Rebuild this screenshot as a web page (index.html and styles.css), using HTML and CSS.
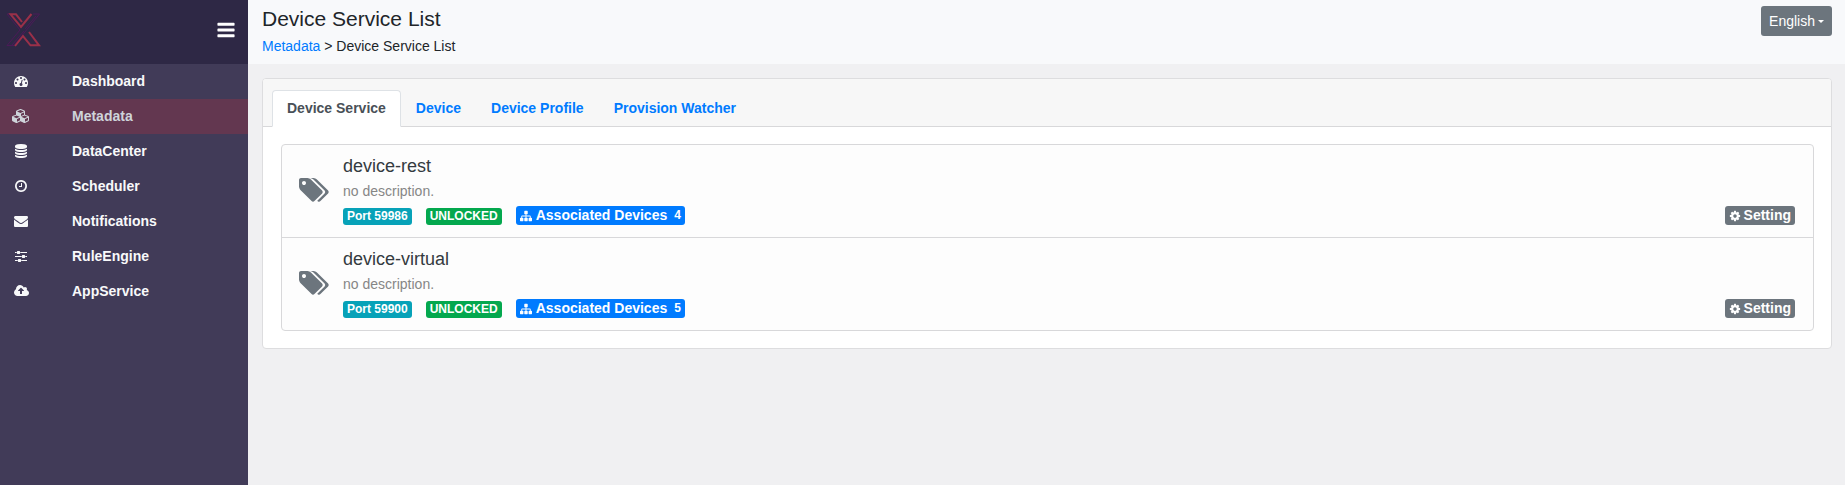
FILE: index.html
```html
<!DOCTYPE html>
<html lang="en">
<head>
<meta charset="utf-8">
<meta name="viewport" content="width=device-width, initial-scale=1">
<title>Device Service List</title>
<link rel="stylesheet" href="styles.css">
</head>
<body>
<svg class="sprite" aria-hidden="true">
  <symbol id="bars" viewBox="0 0 1792 1792"><path d="M1664 1344v128q0 26-19 45t-45 19h-1408q-26 0-45-19t-19-45v-128q0-26 19-45t45-19h1408q26 0 45 19t19 45zm0-512v128q0 26-19 45t-45 19h-1408q-26 0-45-19t-19-45v-128q0-26 19-45t45-19h1408q26 0 45 19t19 45zm0-512v128q0 26-19 45t-45 19h-1408q-26 0-45-19t-19-45v-128q0-26 19-45t45-19h1408q26 0 45 19t19 45z"/></symbol>
  <symbol id="gauge" viewBox="0 0 1792 1792"><path d="M384 1152q0-53-37.5-90.5t-90.5-37.5-90.5 37.5-37.5 90.5 37.5 90.5 90.5 37.5 90.5-37.5 37.5-90.5zm192-448q0-53-37.5-90.5t-90.5-37.5-90.5 37.5-37.5 90.5 37.5 90.5 90.5 37.5 90.5-37.5 37.5-90.5zm428 481l101-382q6-26-7.5-48.5t-38.5-29.5-48 6.5-30 39.5l-101 382q-60 5-107 43.5t-63 98.5q-20 77 20 146t117 89 146-20 89-117q16-60-6-117t-72-91zm660-33q0-53-37.5-90.5t-90.5-37.5-90.5 37.5-37.5 90.5 37.5 90.5 90.5 37.5 90.5-37.5 37.5-90.5zm-640-640q0-53-37.5-90.5t-90.5-37.5-90.5 37.5-37.5 90.5 37.5 90.5 90.5 37.5 90.5-37.5 37.5-90.5zm448 192q0-53-37.5-90.5t-90.5-37.5-90.5 37.5-37.5 90.5 37.5 90.5 90.5 37.5 90.5-37.5 37.5-90.5zm320 448q0 261-141 483-19 29-54 29h-1402q-35 0-54-29-141-221-141-483 0-182 71-348t191-286 286-191 348-71 348 71 286 191 191 286 71 348z"/></symbol>
  <symbol id="cubes" viewBox="0 0 2304 1792"><path d="M640 1632l384-192v-314l-384 164v342zm-64-454l404-173-404-173-404 173zm1088 454l384-192v-314l-384 164v342zm-64-454l404-173-404-173-404 173zm-448-293l384-165v-266l-384 164v267zm-64-379l441-189-441-189-441 189zm1088 518v416q0 36-19 67t-52 47l-448 224q-25 14-57 14t-57-14l-448-224q-4-2-7-4-2 2-7 4l-448 224q-25 14-57 14t-57-14l-448-224q-33-16-52-47t-19-67v-416q0-38 21.500-70t56.500-48l434-186v-400q0-38 21.500-70t56.500-48l448-192q23-10 50-10t50 10l448 192q35 16 56.500 48t21.500 70v400l434 186q36 16 57 48t21 70z" fill-rule="evenodd"/></symbol>
  <symbol id="database" viewBox="0 0 1792 1792"><path d="M896 768q237 0 443-43t325-127v170q0 69-103 128t-280 93.5-385 34.5-385-34.5-280-93.5-103-128v-170q119 84 325 127t443 43zm0 768q237 0 443-43t325-127v170q0 69-103 128t-280 93.5-385 34.5-385-34.5-280-93.5-103-128v-170q119 84 325 127t443 43zm0-384q237 0 443-43t325-127v170q0 69-103 128t-280 93.5-385 34.5-385-34.5-280-93.5-103-128v-170q119 84 325 127t443 43zm0-1152q208 0 385 34.5t280 93.5 103 128v128q0 69-103 128t-280 93.5-385 34.5-385-34.5-280-93.5-103-128v-128q0-69 103-128t280-93.5 385-34.5z"/></symbol>
  <symbol id="clock" viewBox="0 0 1792 1792"><path d="M1024 544v448q0 14-9 23t-23 9h-320q-14 0-23-9t-9-23v-64q0-14 9-23t23-9h224v-352q0-14 9-23t23-9h64q14 0 23 9t9 23zm416 352q0-148-73-273t-198-198-273-73-273 73-198 198-73 273 73 273 198 198 273 73 273-73 198-198 73-273zm224 0q0 209-103 385.5t-279.5 279.5-385.5 103-385.5-103-279.5-279.5-103-385.5 103-385.5 279.5-279.5 385.5-103 385.5 103 279.5 279.5 103 385.5z"/></symbol>
  <symbol id="envelope" viewBox="0 0 1792 1792"><path d="M1792 710v794q0 66-47 113t-113 47h-1472q-66 0-113-47t-47-113v-794q44 49 101 87 362 246 497 345 57 42 92.5 65.5t94.5 48 110 24.500h2q51 0 110-24.500t94.500-48 92.500-65.500q170-123 498-345 57-39 100-87zm0-294q0 79-49 151t-122 123q-376 261-468 325-10 7-42.500 31t-54 38.500-52 32.500-57.500 27-50 9h-2q-23 0-50-9t-57.500-27-52-32.500-54-38.500-42.500-31q-91-64-262-182.500t-205-142.500q-62-42-117-115.500t-55-136.500q0-78 41.500-130t118.500-52h1472q65 0 112.500 47t47.500 113z"/></symbol>
  <symbol id="sliders" viewBox="0 0 1792 1792"><path d="M480 1408v128h-352v-128h352zm352-128q26 0 45 19t19 45v256q0 26-19 45t-45 19h-256q-26 0-45-19t-19-45v-256q0-26 19-45t45-19h256zm160-384v128h-864v-128h864zm-640-512v128h-224v-128h224zm1312 1024v128h-736v-128h736zm-960-1152q26 0 45 19t19 45v256q0 26-19 45t-45 19h-256q-26 0-45-19t-19-45v-256q0-26 19-45t45-19h256zm640 512q26 0 45 19t19 45v256q0 26-19 45t-45 19h-256q-26 0-45-19t-19-45v-256q0-26 19-45t45-19h256zm320 128v128h-224v-128h224zm0-512v128h-864v-128h864z"/></symbol>
  <symbol id="cloud" viewBox="0 0 1920 1792"><path d="M1280 864q0-14-9-23l-352-352q-9-9-23-9t-23 9l-351 351q-10 12-10 24 0 14 9 23t23 9h224v352q0 13 9.500 22.500t22.500 9.500h192q13 0 22.500-9.500t9.500-22.500v-352h224q13 0 22.500-9.500t9.500-22.500zm640 288q0 159-112.500 271.500t-271.500 112.500h-1088q-185 0-316.500-131.500t-131.500-316.500q0-130 70-240t188-165q-2-30-2-43 0-212 150-362t362-150q156 0 285.500 87t188.500 231q71-62 166-62 106 0 181 75t75 181q0 76-41 138 130 31 213.500 135.500t83.500 238.500z"/></symbol>
  <symbol id="tags" viewBox="0 0 1920 1792"><path d="M448 448q0-53-37.500-90.500t-90.500-37.500-90.500 37.500-37.500 90.500 37.500 90.500 90.500 37.500 90.500-37.500 37.500-90.500zm1067 576q0 53-37 90l-491 492q-39 37-91 37-53 0-90-37l-715-716q-38-37-64.500-101t-26.500-117v-416q0-52 38-90t90-38h416q53 0 117 26.500t102 64.500l715 714q37 39 37 91zm384 0q0 53-37 90l-491 492q-39 37-91 37-36 0-59-14t-53-45l470-470q37-37 37-90 0-52-37-91l-715-714q-38-38-102-64.500t-117-26.500h224q53 0 117 26.500t102 64.500l715 714q37 39 37 91z"/></symbol>
  <symbol id="sitemap" viewBox="0 0 1792 1792"><path d="M1792 1248v320q0 40-28 68t-68 28h-320q-40 0-68-28t-28-68v-320q0-40 28-68t68-28h96v-192h-512v192h96q40 0 68 28t28 68v320q0 40-28 68t-68 28h-320q-40 0-68-28t-28-68v-320q0-40 28-68t68-28h96v-192h-512v192h96q40 0 68 28t28 68v320q0 40-28 68t-68 28h-320q-40 0-68-28t-28-68v-320q0-40 28-68t68-28h96v-192q0-52 38-90t90-38h512v-192h-96q-40 0-68-28t-28-68v-320q0-40 28-68t68-28h320q40 0 68 28t28 68v320q0 40-28 68t-68 28h-96v192h512q52 0 90 38t38 90v192h96q40 0 68 28t28 68z"/></symbol>
  <symbol id="cog" viewBox="0 0 1792 1792"><path d="M1152 896q0-106-75-181t-181-75-181 75-75 181 75 181 181 75 181-75 75-181zm512-109v222q0 12-8 23t-20 13l-185 28q-19 54-39 91 35 50 107 138 10 12 10 25t-9 23q-27 37-99 108t-94 71q-12 0-26-9l-138-108q-44 23-91 38-16 136-29 186-7 28-36 28h-222q-14 0-24.500-8.500t-11.500-21.500l-28-184q-49-16-90-37l-141 107q-10 9-25 9-14 0-25-11-126-114-165-168-7-10-7-23 0-12 8-23 15-21 51-66.500t54-70.500q-27-50-41-99l-183-27q-13-2-21-12.500t-8-23.500v-222q0-12 8-23t19-13l186-28q14-46 39-92-40-57-107-138-10-12-10-24 0-10 9-23 26-36 98.500-107.500t94.500-71.500q13 0 26 10l138 107q44-23 91-38 16-136 29-186 7-28 36-28h222q14 0 24.500 8.500t11.500 21.500l28 184q49 16 90 37l142-107q9-9 24-9 13 0 25 10 129 119 165 170 7 8 7 22 0 12-8 23-15 21-51 66.500t-54 70.500q26 50 41 98l183 28q13 2 21 12.500t8 23.500z"/></symbol>
</svg>
<div class="app">
  <aside class="sidebar">
    <div class="brand">
      <svg class="logo" viewBox="0 0 36 36" role="img" aria-label="Logo">
        <path class="logo-violet" d="M5 2H2L15 18L2 33.500H9L34.500 2H28M19 19L7 33M31 4L20 17"/>
        <path class="logo-red" d="M17 10L11 2.300H5.500L16 15L26.500 2M24 20L34 33.300H25.500L18 24L10 34"/>
      </svg>
      <button class="toggle" type="button" aria-label="Toggle menu"><svg class="icon-lg"><use href="#bars"/></svg></button>
    </div>
    <nav class="menu">
      <a class="menu-item" href="#"><span class="menu-icon"><svg class="icon"><use href="#gauge"/></svg></span>Dashboard</a>
      <a class="menu-item active" href="#"><span class="menu-icon"><svg class="icon icon-cubes"><use href="#cubes"/></svg></span>Metadata</a>
      <a class="menu-item" href="#"><span class="menu-icon"><svg class="icon"><use href="#database"/></svg></span>DataCenter</a>
      <a class="menu-item" href="#"><span class="menu-icon"><svg class="icon"><use href="#clock"/></svg></span>Scheduler</a>
      <a class="menu-item" href="#"><span class="menu-icon"><svg class="icon"><use href="#envelope"/></svg></span>Notifications</a>
      <a class="menu-item" href="#"><span class="menu-icon"><svg class="icon"><use href="#sliders"/></svg></span>RuleEngine</a>
      <a class="menu-item" href="#"><span class="menu-icon"><svg class="icon icon-cloud"><use href="#cloud"/></svg></span>AppService</a>
    </nav>
  </aside>
  <div class="page">
    <header class="topbar">
      <div>
        <h1 class="title">Device Service List</h1>
        <div class="breadcrumb"><a class="link" href="#">Metadata</a> &gt; Device Service List</div>
      </div>
      <button class="language" type="button" aria-haspopup="menu">English<span class="caret"></span></button>
    </header>
    <main class="card">
      <nav class="tabs">
        <a class="tab current" href="#" aria-current="page">Device Service</a>
        <a class="tab" href="#">Device</a>
        <a class="tab" href="#">Device Profile</a>
        <a class="tab" href="#">Provision Watcher</a>
      </nav>
      <ul class="services">
        <li class="service">
          <svg class="tags"><use href="#tags"/></svg>
          <div class="details">
            <h2 class="name">device-rest</h2>
            <p class="description">no description.</p>
            <div class="badges">
              <span class="badge port">Port 59986</span>
              <span class="badge unlocked">UNLOCKED</span>
              <button class="badge large devices" type="button"><svg class="icon-sm"><use href="#sitemap"/></svg>Associated Devices<span class="count">4</span></button>
            </div>
          </div>
          <button class="badge large setting" type="button"><svg class="icon-sm"><use href="#cog"/></svg>Setting</button>
        </li>
        <li class="service">
          <svg class="tags"><use href="#tags"/></svg>
          <div class="details">
            <h2 class="name">device-virtual</h2>
            <p class="description">no description.</p>
            <div class="badges">
              <span class="badge port">Port 59900</span>
              <span class="badge unlocked">UNLOCKED</span>
              <button class="badge large devices" type="button"><svg class="icon-sm"><use href="#sitemap"/></svg>Associated Devices<span class="count">5</span></button>
            </div>
          </div>
          <button class="badge large setting" type="button"><svg class="icon-sm"><use href="#cog"/></svg>Setting</button>
        </li>
      </ul>
    </main>
  </div>
</div>
</body>
</html>
```

FILE: styles.css
```css
* { box-sizing: border-box; }
body {
  margin: 0;
  font: 14px/21px "Liberation Sans", Arial, sans-serif;
  color: #212529;
  background: #f0f0f2;
}
h1, h2, p, ul { margin: 0; padding: 0; font-weight: 400; }
a { text-decoration: none; }
button { font: inherit; border: 0; cursor: pointer; }
svg { fill: currentColor; flex: none; }
.sprite { display: none; }
.icon { width: 14px; height: 14px; }
.icon-cubes { width: 18px; }
.icon-cloud { width: 15px; }
.icon-lg { display: block; width: 20px; height: 20px; }
.icon-sm { width: 12px; height: 12px; }

.app { display: flex; min-height: 100vh; }
.sidebar { flex: none; width: 248px; background: #413b58; }
.brand {
  display: flex;
  justify-content: space-between;
  align-items: flex-start;
  height: 64px;
  padding: 12px 12px 0 5px;
  background: #2e2845;
}
.logo { width: 36px; height: 36px; }
.logo-violet { fill: none; stroke: #4b1a58; stroke-width: 1; }
.logo-red { fill: none; stroke: #9a3049; stroke-width: 2; }
.toggle { margin-top: 8px; padding: 0; background: none; color: #fff; }
.menu-item {
  display: flex;
  align-items: center;
  height: 35px;
  color: #f8f9fa;
  font-weight: 700;
}
.menu-item.active { background: #633750; color: #ced4da; }
.menu-icon { display: flex; justify-content: center; width: 42px; margin-right: 30px; padding-bottom: 1px; }

.page { flex: 1; min-width: 0; }
.topbar {
  display: flex;
  justify-content: space-between;
  align-items: flex-start;
  height: 64px;
  padding: 6px 13px 0 14px;
  background: #f8f9fb;
}
.title { font-size: 21px; line-height: 25px; margin-bottom: 5px; }
.link { color: #007bff; }
.language {
  display: flex;
  align-items: center;
  gap: 3px;
  height: 30px;
  padding: 0 8px;
  border-radius: 3px;
  background: #6c757d;
  color: #fff;
}
.caret { border: 3px solid transparent; border-top-color: currentColor; border-bottom: 0; }

.card {
  margin: 14px 13px 14px 14px;
  background: #fff;
  border: 1px solid #dddddf;
  border-radius: 4px;
}
.tabs {
  display: flex;
  padding: 11px 9px 0;
  background: #f7f7f7;
  border-bottom: 1px solid #d8d8da;
  border-radius: 3px 3px 0 0;
}
.tab {
  margin-bottom: -1px;
  padding: 7px 14px;
  border: 1px solid transparent;
  border-radius: 4px 4px 0 0;
  color: #007bff;
  font-weight: 700;
}
.tab.current { color: #495057; background: #fff; border-color: #dee2e6 #dee2e6 #fff; }

.services {
  margin: 17px 17px 17px 18px;
  border: 1px solid #d8d8da;
  border-radius: 4px;
  list-style: none;
  background: #fdfdfd;
}
.service { display: flex; align-items: center; padding: 10px 18px 12px 17px; }
.service + .service { border-top: 1px solid #d8d8da; }
.tags { width: 30px; height: 28px; margin-right: 14px; color: #6c757d; }
.details { flex: 1; }
.name { font-size: 18px; line-height: 22px; color: #343a40; }
.description { margin: 3px 0 4px; line-height: 22px; color: #868686; }
.badges { display: flex; align-items: flex-end; gap: 14px; }
.badge {
  display: flex;
  align-items: center;
  height: 17px;
  padding: 0 4px;
  border-radius: 3px;
  color: #fff;
  font-size: 12px;
  font-weight: 700;
}
.large { height: 19px; gap: 4px; font-size: 14px; }
.port { background: #07a2b8; }
.unlocked { background: #04a84e; }
.devices { background: #007bff; }
.count { margin-left: 3px; font-size: 12px; }
.setting { align-self: flex-end; gap: 3px; background: #6c757d; }
```
